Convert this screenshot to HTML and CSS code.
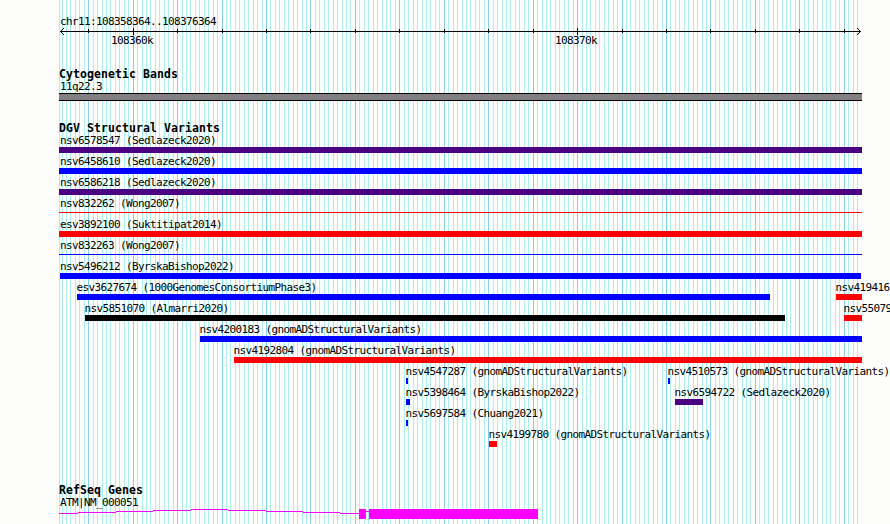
FILE: index.html
```html
<!DOCTYPE html>
<html lang="en">
<head>
  <meta charset="UTF-8" />
  <title>chr11:108358364..108376364</title>
  <link rel="stylesheet" href="styles.css">
</head>
<body>
  <svg class="gridlines" id="gridlines" width="890" height="524" shape-rendering="crispEdges"></svg>

  <main class="browser">
    <header class="overview">
      <div class="label">chr11:108358364..108376364</div>
      <svg class="ruler" id="ruler" width="890" height="9" shape-rendering="crispEdges"></svg>
      <div class="scale" id="scale"></div>
    </header>

    <section class="track bands">
      <h2>Cytogenetic Bands</h2>
      <div class="label">11q22.3</div>
      <div class="band"></div>
    </section>

    <section class="track variants">
      <h2>DGV Structural Variants</h2>
      <div id="variants"></div>
    </section>

    <section class="track genes">
      <h2>RefSeq Genes</h2>
      <div class="label">ATM|NM_000051</div>
      <svg class="gene" width="890" height="13" shape-rendering="crispEdges">
        <g fill="#ff00ff">
          <rect x="59" y="5" width="19" height="1"/>
          <rect x="78" y="4" width="38" height="1"/>
          <rect x="116" y="3" width="37" height="1"/>
          <rect x="153" y="2" width="38" height="1"/>
          <rect x="191" y="1" width="37" height="1"/>
          <rect x="228" y="2" width="38" height="1"/>
          <rect x="266" y="3" width="37" height="1"/>
          <rect x="303" y="4" width="37" height="1"/>
          <rect x="340" y="5" width="19" height="1"/>
          <rect x="359" y="1" width="7" height="10"/>
          <rect x="366" y="3" width="3" height="1"/>
          <rect x="369" y="1" width="169" height="10"/>
        </g>
      </svg>
    </section>
  </main>

  <script>
    const start = 108358364;
    const end = 108376364;
    const left = 60;
    const pxPerBase = 800 / (end - start);
    const toX = pos => Math.round(left + (pos - start) * pxPerBase);

    // [x, width, colour, name] for each feature in a row
    const rows = [
      [[59, 803, 'purple', 'nsv6578547 (Sedlazeck2020)']],
      [[59, 803, 'blue', 'nsv6458610 (Sedlazeck2020)']],
      [[59, 803, 'purple', 'nsv6586218 (Sedlazeck2020)']],
      [[59, 803, 'red thin', 'nsv832262 (Wong2007)']],
      [[59, 803, 'red', 'esv3892100 (Suktitipat2014)']],
      [[59, 803, 'blue thin', 'nsv832263 (Wong2007)']],
      [[60, 801, 'blue', 'nsv5496212 (ByrskaBishop2022)']],
      [[77, 693, 'blue', 'esv3627674 (1000GenomesConsortiumPhase3)'], [836, 26, 'red', 'nsv419416']],
      [[85, 700, 'black', 'nsv5851070 (Almarri2020)'], [844, 18, 'red', 'nsv55079']],
      [[200, 662, 'blue', 'nsv4200183 (gnomADStructuralVariants)']],
      [[234, 628, 'red', 'nsv4192804 (gnomADStructuralVariants)']],
      [[406, 2, 'blue', 'nsv4547287 (gnomADStructuralVariants)'], [668, 2, 'blue', 'nsv4510573 (gnomADStructuralVariants)']],
      [[406, 4, 'blue', 'nsv5398464 (ByrskaBishop2022)'], [675, 28, 'purple', 'nsv6594722 (Sedlazeck2020)']],
      [[406, 2, 'blue', 'nsv5697584 (Chuang2021)']],
      [[489, 8, 'red', 'nsv4199780 (gnomADStructuralVariants)']]
    ];

    // names never start left of the first base
    document.getElementById('variants').innerHTML = rows.map(row => `
      <div class="row">
        ${row.map(([x, width, colour, name]) => `
          <div class="feature" style="grid-column-start: ${x + 1}">
            <div class="name" style="margin-left: ${Math.max(left - x, -0.5)}px">${name}</div>
            <div class="bar ${colour}" style="width: ${width}px"></div>
          </div>`).join('')}
      </div>`).join('');

    // vertical lines every 100 bases, darker every 1000
    let lines = '<rect x="59" y="0" width="1" height="524" fill="#afeeee"/>';
    let ticks = '';
    for (let pos = Math.ceil(start / 100) * 100; pos <= end; pos += 100) {
      const x = toX(pos);
      const major = pos % 1000 === 0;
      lines += `<rect x="${x}" y="0" width="1" height="524" fill="${major ? '#87ceeb' : '#afeeee'}"/>`;
      if (major) {
        const big = pos % 10000 === 0;
        ticks += `<rect x="${x}" y="${big ? 1 : 2}" width="1" height="${big ? 7 : 4}"/>`;
      }
    }
    document.getElementById('gridlines').innerHTML = lines;

    document.getElementById('ruler').innerHTML = `
      <rect x="60" y="4" width="801" height="1"/>
      ${ticks}
      <path d="M61 3h1v1h-1zM62 2h1v1h-1zM63 1h1v1h-1zM61 5h1v1h-1zM62 6h1v1h-1zM63 7h1v1h-1z"/>
      <path d="M859 3h1v1h-1zM858 2h1v1h-1zM857 1h1v1h-1zM859 5h1v1h-1zM858 6h1v1h-1zM857 7h1v1h-1z"/>`;

    document.getElementById('scale').innerHTML = [108360000, 108370000].map(pos =>
      `<span class="name" style="grid-column-start: ${toX(pos) - 21}">${pos / 1000}k</span>`).join('');
  </script>
</body>
</html>
```
FILE: styles.css
```css
* {margin: 0; padding: 0; box-sizing: border-box;}
body {
  width: 890px;
  height: 524px;
  overflow: hidden;
  background: #fdfefb;
  color: #000;
  font-family: 'DejaVu Sans Mono', monospace;
}

svg {
  display: block;
}

.gridlines {
  position: absolute;
  top: 0;
  left: 0;
}

.browser {
  position: relative;
  height: 524px;
  padding-top: 15px;
  overflow: hidden;
}

.label, .name {
  height: 12px;
  font-size: 11px;
  line-height: 14px;
  letter-spacing: -0.622px;
  white-space: nowrap;
}
.label {
  padding-left: 60px;
}

h2 {
  height: 12px;
  padding-left: 59px;
  font-size: 11.5px;
  line-height: 12px;
  letter-spacing: 0.077px;
}

.scale, .row {
  display: grid;
  grid-template-columns: repeat(890, 1px);
}
.scale > *, .feature {
  grid-row: 1;
}
.scale {
  height: 13px;
  margin-top: -2px;
}

.bands {
  margin-top: 21px;
}
.band {
  width: 803px;
  height: 8px;
  margin: 1px 0 0 59px;
  background: #838083;
  border: solid #000;
  border-width: 1px 0;
}

.variants {
  margin-top: 21px;
}
.row {
  height: 21px;
}
.feature {
  width: 0;
}

.bar {
  height: 6px;
  margin-top: 1px;
}
.thin {
  height: 1px;
  margin-top: 3px;
}
.purple {
  background: #4b0082;
}
.blue {
  background: #0000ff;
}
.red {
  background: #ff0000;
}
.black {
  background: #000;
}

.genes {
  margin-top: 35px;
}
```
